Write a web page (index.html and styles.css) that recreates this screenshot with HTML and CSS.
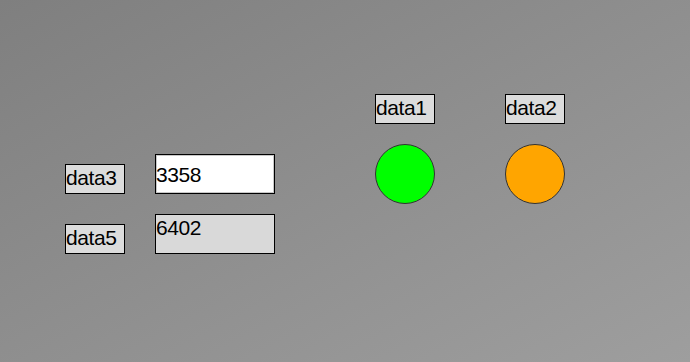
FILE: index.html
```html
<!DOCTYPE html>
<html lang="en">
<head>
	<meta charset="UTF-8">
	<title>data panel</title>
	<link rel="stylesheet" href="styles.css">
</head>
<body>
	<div id="panel">
		<div class="fields">
			<p class="tag">data3</p>
			<input class="val" type="text" value="3358">
			<p class="tag">data5</p>
			<div class="val ro">6402</div>
		</div>
		<div class="lamps">
			<div class="lamp">
				<p class="tag">data1</p>
				<span class="dot green"></span>
			</div>
			<div class="lamp">
				<p class="tag">data2</p>
				<span class="dot orange"></span>
			</div>
		</div>
	</div>
</body>
</html>
```

FILE: styles.css
```css
*{padding:0;margin:0;box-sizing:border-box;}
html,body{width:690px;height:362px;overflow:hidden;}
body{background:linear-gradient(to bottom right,#7f7f7f,#9e9e9e);font-family:"Liberation Sans",Arial,sans-serif;font-size:21px;color:#000;}
#panel{display:flex;align-items:flex-start;padding:94px 0 0 65px;}
.fields{display:grid;grid-template-columns:60px 120px;grid-auto-rows:40px;column-gap:30px;row-gap:20px;align-items:end;margin-top:60px;}
.tag{width:60px;height:30px;border:1px solid #000;background-color:#dcdcdc;line-height:26px;letter-spacing:-0.4px;white-space:nowrap;overflow:hidden;}
.val{width:120px;height:40px;border:1px solid #000;font-family:"Liberation Sans",Arial,sans-serif;font-size:21px;letter-spacing:-0.4px;color:#000;padding:0;}
input.val{background-color:#fff;box-shadow:inset 0 0 0 1px #c8c8c8;outline:none;padding-top:2px;}
.ro{background-color:#d9d9d9;line-height:24px;padding-top:1px;}
.lamps{display:flex;gap:70px;margin-left:100px;}
.lamp{display:flex;flex-direction:column;gap:20px;width:60px;}
.dot{display:block;width:60px;height:60px;border:1px solid #333;border-radius:50%;}
.green{background-color:#00ff00;}
.orange{background-color:#ffa500;}
```
